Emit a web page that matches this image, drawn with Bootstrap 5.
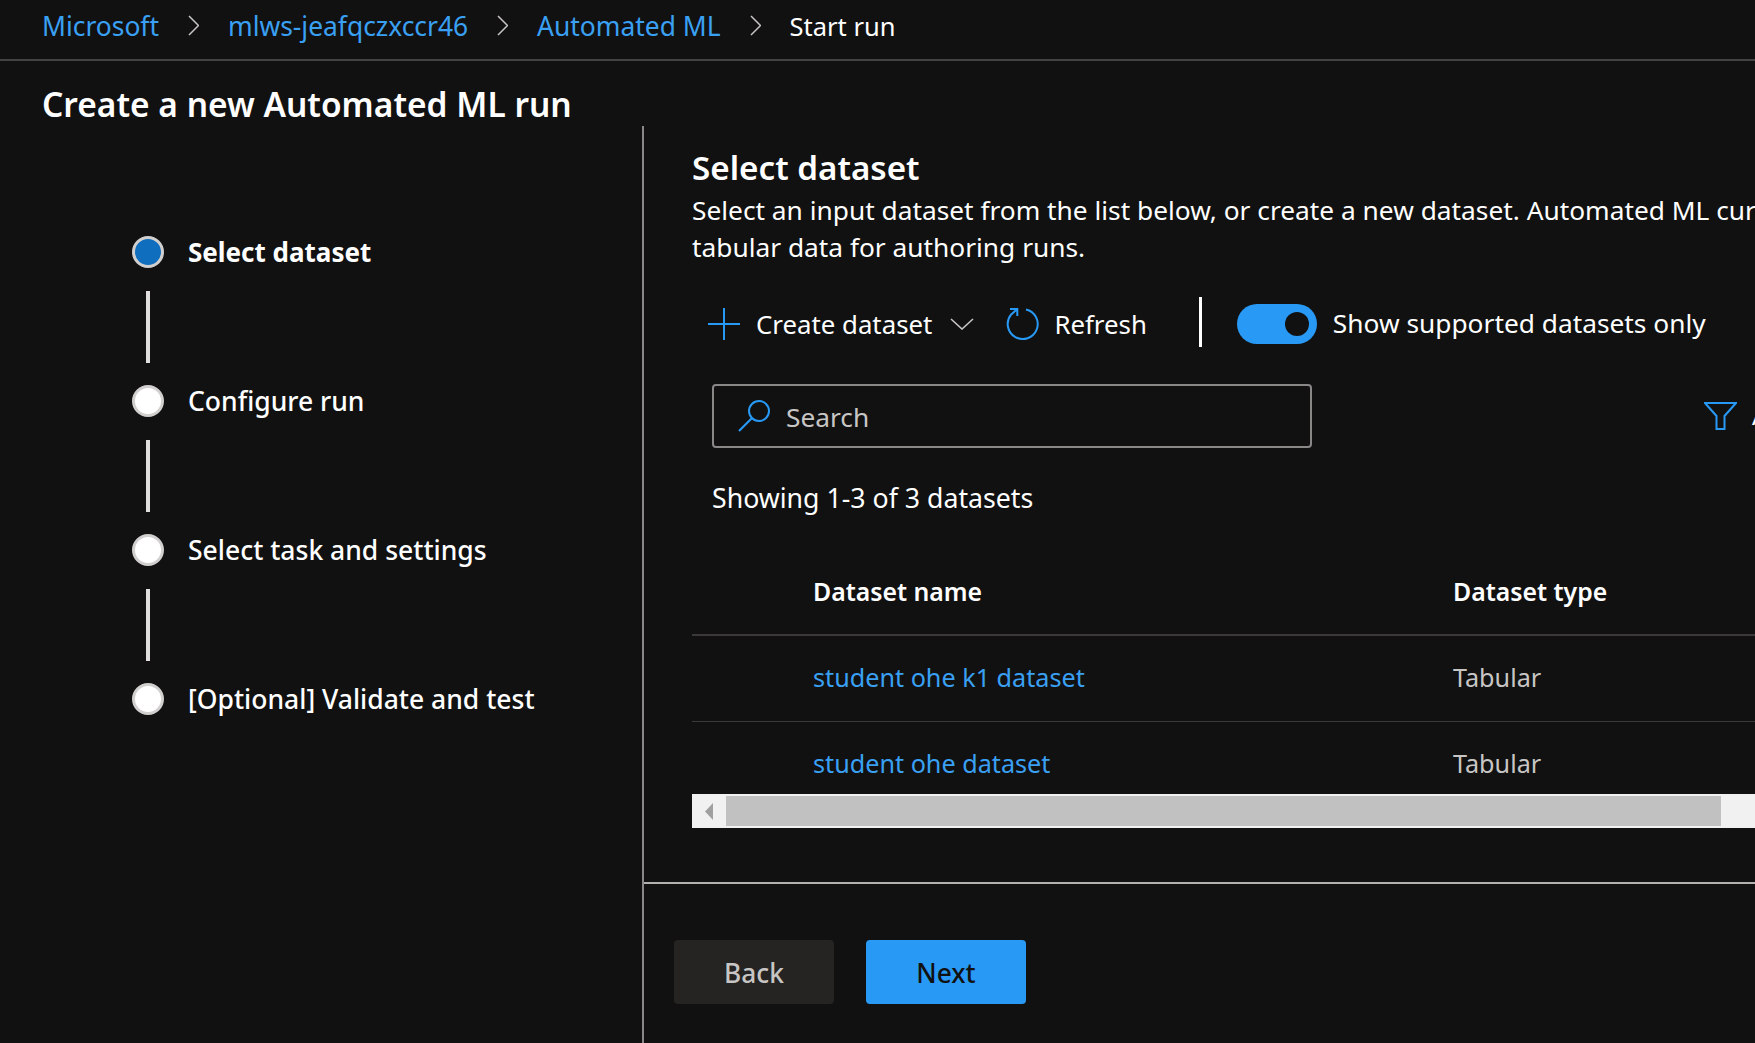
<!DOCTYPE html>
<html lang="en">
<head>
<meta charset="utf-8">
<title>Start run</title>
<link href="https://cdn.jsdelivr.net/npm/bootstrap@5.3.0/dist/css/bootstrap.min.css" rel="stylesheet">
<style>
html,body{height:100%;}
body{background:#111;color:#fff;font-family:"Noto Sans","Open Sans","Liberation Sans",sans-serif;font-size:26.3px;overflow:hidden;}
a{color:#3aa0f3;text-decoration:none;}
.crumbs{height:61px;border-bottom:2px solid #444;padding-left:42px;margin:0;align-items:center;list-style:none;gap:29px;padding-bottom:8px;line-height:36px;flex-wrap:nowrap;font-size:26.4px;}
.crumbs svg{display:block;}
.crumb-end{font-size:25.5px;}
.page-title{height:65px;padding:21px 0 0 42px;font-size:33.5px;line-height:44px;font-weight:600;margin:0;}
.work{height:917px;}
.left-col{width:642px;flex:none;padding:110px 0 0 132px;}
.step-row{height:32px;gap:24px;font-size:26.5px;font-weight:500;line-height:32px;white-space:nowrap;}
.step-row.on{font-weight:700;font-size:26px;}
.dot{width:32px;height:32px;border-radius:50%;background:#fff;border:3px solid #d2d0ce;flex:none;}
.step-row.on .dot{background:#106ebe;}
.step-link{width:4px;height:72px;background:#e1dfdd;margin:23px 0 22px 14px;}
.right-col{flex:1;min-width:0;border-left:2px solid #8a8886;overflow:hidden;}
.right-body{height:756px;padding:22px 0 0 48px;overflow:hidden;}
.sec-title{font-size:33.2px;line-height:40px;font-weight:600;margin:0 0 4px;white-space:nowrap;}
.sec-desc{line-height:36.5px;margin:0;white-space:nowrap;}
.tools{height:52px;margin-top:33px;padding-left:16px;white-space:nowrap;}
.tools svg{flex:none;display:block;}
.tool-txt{font-size:25.8px;}
.drop-ic{margin-left:18px;}
.refresh-ic{margin-left:32px;margin-right:15px;}
.tool-sep{width:3px;height:50px;background:#fff;margin:0 35px 4px 52px;flex:none;}
.switcher{width:80px;height:40px;border-radius:20px;background:#2899f5;flex:none;position:relative;margin-right:16px;}
.switcher i{position:absolute;right:8px;top:8px;width:24px;height:24px;border-radius:50%;background:#111;}
.search-row{margin-top:34px;padding-left:20px;height:64px;}
.search-box{width:600px;height:64px;border:2px solid #8a8886;border-radius:4px;padding-left:24px;gap:15px;color:#c8c6c4;flex:none;}
.search-label{padding-top:3px;}
.filter-ic{margin-left:392px;flex:none;}
.filter-txt{margin-left:15px;white-space:nowrap;}
.count{margin:32px 0 0 20px;line-height:36px;height:36px;font-size:26.7px;}
.table-clip{margin-top:33px;height:245px;overflow:hidden;width:1300px;font-size:25.2px;}
.table-clip table{margin:0;width:1300px;table-layout:fixed;--bs-table-bg:transparent;--bs-table-color:#fff;--bs-table-border-color:#3b3a39;}
.table-clip th{height:86px;vertical-align:middle;font-weight:600;padding:0;border-bottom-width:2px;font-size:24.8px;}
.table-clip td{height:86px;vertical-align:middle;padding:0;color:#c8c6c4;}
.table-clip td a{color:#3aa0f3;}
.hbar{height:34px;background:#f1f1f1;padding:2px 0;}
.hbar-arrow{width:34px;flex:none;padding-left:13px;}
.hbar-thumb{width:995px;background:#c1c1c1;flex:none;}
.hbar-rest{flex:1;}
.foot{height:161px;border-top:2px solid #b3b0ad;padding:56px 0 0 30px;gap:32px;}
.act{width:160px;height:64px;border:0;border-radius:4px;font-size:26.3px;font-weight:500;padding:4px 0 0;}
.act-back,.act-back:hover{background:#252423;color:#c8c6c4;}
.act-next,.act-next:hover{background:#2899f5;color:#111;}
</style>
</head>
<body>
<nav aria-label="breadcrumb">
<ul class="crumbs d-flex">
<li><a href="#">Microsoft</a></li>
<li><svg width="11" height="21" viewBox="0 0 11 21"><path d="M1 1l9.5 9.5L1 20" fill="none" stroke="#c8c6c4" stroke-width="1.5"/></svg></li>
<li><a href="#">mlws-jeafqczxccr46</a></li>
<li><svg width="11" height="21" viewBox="0 0 11 21"><path d="M1 1l9.5 9.5L1 20" fill="none" stroke="#c8c6c4" stroke-width="1.5"/></svg></li>
<li><a href="#">Automated ML</a></li>
<li><svg width="11" height="21" viewBox="0 0 11 21"><path d="M1 1l9.5 9.5L1 20" fill="none" stroke="#c8c6c4" stroke-width="1.5"/></svg></li>
<li class="crumb-end">Start run</li>
</ul>
</nav>
<h1 class="page-title">Create a new Automated ML run</h1>
<div class="work d-flex">
<aside class="left-col">
<div class="step-row on d-flex align-items-center"><span class="dot"></span><span>Select dataset</span></div>
<div class="step-link"></div>
<div class="step-row d-flex align-items-center"><span class="dot"></span><span>Configure run</span></div>
<div class="step-link"></div>
<div class="step-row d-flex align-items-center"><span class="dot"></span><span>Select task and settings</span></div>
<div class="step-link"></div>
<div class="step-row d-flex align-items-center"><span class="dot"></span><span>[Optional] Validate and test</span></div>
</aside>
<main class="right-col">
<div class="right-body">
<h2 class="sec-title">Select dataset</h2>
<p class="sec-desc">Select an input dataset from the list below, or create a new dataset. Automated ML currently only supports<br>tabular data for authoring runs.</p>
<div class="tools d-flex align-items-center">
<svg width="32" height="32" viewBox="0 0 32 32" class="me-3"><path d="M16 0v32M0 16h32" stroke="#2899f5" stroke-width="2" fill="none"/></svg>
<span class="tool-txt">Create dataset</span>
<svg width="24" height="12" viewBox="0 0 24 12" class="drop-ic"><path d="M1 1l11 10L23 1" fill="none" stroke="#c8c6c4" stroke-width="1.6"/></svg>
<svg width="33" height="33" viewBox="0 0 33 33" class="refresh-ic"><path d="M20 1.4A15 15 0 1 1 5.2 6.4L11.3 .9M4 .9h7.3v7" fill="none" stroke="#2899f5" stroke-width="2"/></svg>
<span class="tool-txt">Refresh</span>
<span class="tool-sep"></span>
<span class="switcher"><i></i></span>
<span>Show supported datasets only</span>
</div>
<div class="search-row d-flex align-items-center">
<div class="search-box d-flex align-items-center">
<svg width="33" height="32" viewBox="0 0 33 32"><circle cx="21" cy="11" r="10" fill="none" stroke="#2899f5" stroke-width="2"/><path d="M14 18L1 31" stroke="#2899f5" stroke-width="2.2" fill="none"/></svg>
<span class="search-label">Search</span>
</div>
<svg class="filter-ic" width="33" height="28" viewBox="0 0 33 28"><path d="M1 1h31L20.5 14v13h-8V14z" fill="none" stroke="#2899f5" stroke-width="2"/></svg>
<span class="filter-txt">Add filter</span>
</div>
<div class="count">Showing 1-3 of 3 datasets</div>
<div class="table-clip">
<table class="table">
<colgroup><col style="width:121px"><col style="width:640px"><col></colgroup>
<thead><tr><th></th><th>Dataset name</th><th>Dataset type</th></tr></thead>
<tbody>
<tr><td></td><td><a href="#">student ohe k1 dataset</a></td><td>Tabular</td></tr>
<tr><td></td><td><a href="#">student ohe dataset</a></td><td>Tabular</td></tr>
</tbody>
</table>
</div>
<div class="hbar d-flex">
<div class="hbar-arrow d-flex align-items-center"><svg width="8" height="17" viewBox="0 0 8 17"><path d="M8 0v17L0 8.5z" fill="#a0a0a0"/></svg></div>
<div class="hbar-thumb"></div>
<div class="hbar-rest"></div>
</div>
</div>
<div class="foot d-flex align-items-start">
<button type="button" class="btn act act-back">Back</button>
<button type="button" class="btn act act-next">Next</button>
</div>
</main>
</div>
<script src="https://cdn.jsdelivr.net/npm/bootstrap@5.3.0/dist/js/bootstrap.bundle.min.js"></script>
</body>
</html>
